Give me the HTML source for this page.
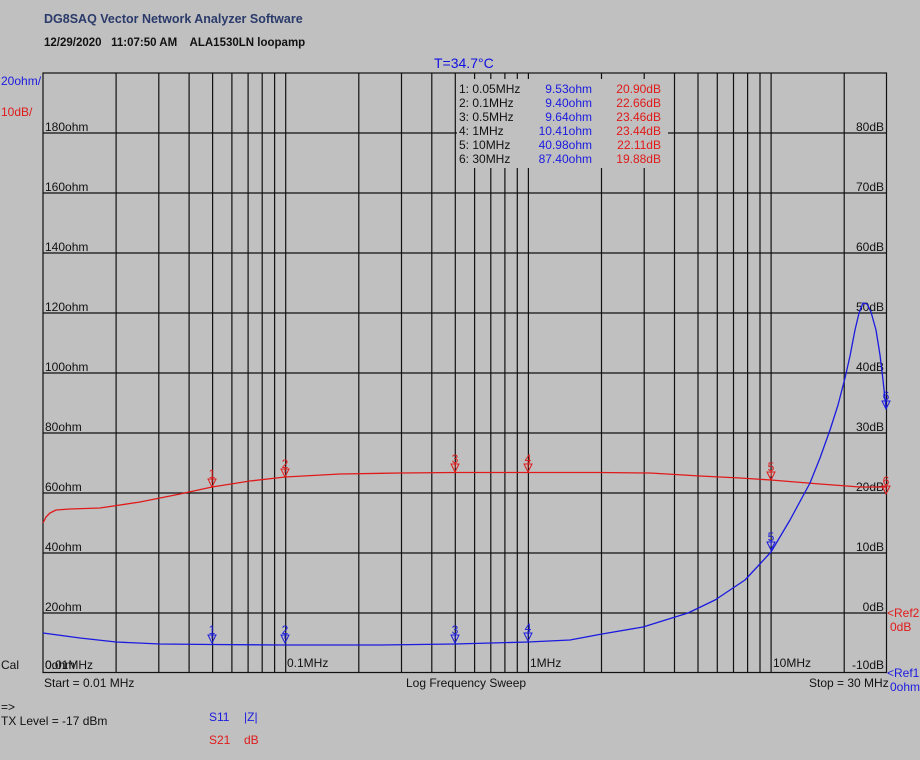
<!DOCTYPE html>
<html><head><meta charset="utf-8"><style>
html,body{margin:0;padding:0;background:#c0c0c0;}
svg{display:block;font-family:"Liberation Sans",Arial,sans-serif;font-size:12px;}
text{white-space:pre;}
</style></head><body>
<svg width="920" height="760" viewBox="0 0 920 760" xmlns="http://www.w3.org/2000/svg" xml:space="preserve">
<rect width="920" height="760" fill="#c0c0c0"/>
<text x="44" y="23" font-weight="bold" font-size="12.5" fill="#2a3a6a">DG8SAQ Vector Network Analyzer Software</text>
<text x="44" y="46" font-weight="bold" font-size="11.5" fill="#111">12/29/2020   11:07:50 AM    ALA1530LN loopamp</text>
<text x="434" y="68" font-size="14" fill="#1010e0">T=34.7°C</text>
<g stroke="#111" stroke-width="1.2" fill="none">
<rect x="43" y="73" width="843.5" height="599.5"/>
<path d="M43 133H886M43 193H886M43 253H886M43 313H886M43 373H886M43 433H886M43 493H886M43 553H886M43 613H886"/>
<path d="M116.1 73V673M158.8 73V673M189.1 73V673M212.6 73V673M231.9 73V673M248.1 73V673M262.2 73V673M274.6 73V673M285.7 73V673M358.8 73V673M401.5 73V673M431.8 73V673M455.3 73V673M474.6 73V673M490.8 73V673M504.9 73V673M517.3 73V673M528.4 73V673M601.5 73V673M644.2 73V673M674.5 73V673M698 73V673M717.3 73V673M733.5 73V673M747.6 73V673M760 73V673M771.1 73V673M844.2 73V673"/>
</g>
<rect x="457" y="79" width="211" height="89" fill="#c0c0c0"/>
<g font-size="12" fill="#111">
<text x="459" y="93">1: 0.05MHz</text><text x="459" y="107">2: 0.1MHz</text><text x="459" y="121">3: 0.5MHz</text><text x="459" y="135">4: 1MHz</text><text x="459" y="149">5: 10MHz</text><text x="459" y="163">6: 30MHz</text>
</g>
<g font-size="12" fill="#1a1ae0" text-anchor="end">
<text x="592" y="93">9.53ohm</text><text x="592" y="107">9.40ohm</text><text x="592" y="121">9.64ohm</text><text x="592" y="135">10.41ohm</text><text x="592" y="149">40.98ohm</text><text x="592" y="163">87.40ohm</text>
</g>
<g font-size="12" fill="#e01a1a" text-anchor="end">
<text x="661" y="93">20.90dB</text><text x="661" y="107">22.66dB</text><text x="661" y="121">23.46dB</text><text x="661" y="135">23.44dB</text><text x="661" y="149">22.11dB</text><text x="661" y="163">19.88dB</text>
</g>
<g font-size="12" fill="#111">
<text x="45" y="131">180ohm</text><text x="45" y="191">160ohm</text><text x="45" y="251">140ohm</text><text x="45" y="311">120ohm</text><text x="45" y="371">100ohm</text><text x="45" y="431">80ohm</text><text x="45" y="491">60ohm</text><text x="45" y="551">40ohm</text><text x="45" y="611">20ohm</text><text x="45" y="669">0ohm</text>
<text x="45" y="669">0.01MHz</text><text x="287" y="667">0.1MHz</text><text x="530" y="667">1MHz</text><text x="773" y="667">10MHz</text>
</g>
<g font-size="12" fill="#111" text-anchor="end">
<text x="884" y="131">80dB</text><text x="884" y="191">70dB</text><text x="884" y="251">60dB</text><text x="884" y="311">50dB</text><text x="884" y="371">40dB</text><text x="884" y="431">30dB</text><text x="884" y="491">20dB</text><text x="884" y="551">10dB</text><text x="884" y="611">0dB</text><text x="884" y="669">-10dB</text>
</g>
<text x="1" y="85" fill="#1a1ae0">20ohm/</text>
<text x="1" y="116" fill="#e01a1a">10dB/</text>
<text x="1" y="669" fill="#111">Cal</text>
<text x="44" y="687" fill="#111">Start = 0.01 MHz</text>
<text x="406" y="687" fill="#111">Log Frequency Sweep</text>
<text x="809" y="687" fill="#111">Stop = 30 MHz</text>
<text x="887" y="617" fill="#e01a1a">&lt;Ref2</text><text x="890" y="631" fill="#e01a1a">0dB</text>
<text x="887" y="677" fill="#1a1ae0">&lt;Ref1</text><text x="890" y="691" fill="#1a1ae0">0ohm</text>
<text x="1" y="711" fill="#111">=&gt;</text>
<text x="1" y="725" fill="#111">TX Level = -17 dBm</text>
<text x="209" y="721" fill="#1a1ae0">S11</text><text x="244" y="721" fill="#1a1ae0">|Z|</text>
<text x="209" y="744" fill="#e01a1a">S21</text><text x="244" y="744" fill="#e01a1a">dB</text>
<polyline fill="none" stroke="#e01a1a" stroke-width="1.3" stroke-linejoin="round" points="43,523 46,517 50,513 56,510 70,509 100,508 140,502 180,494 212,487 250,481 285,477 340,474 400,473 455,472.5 528,472.5 600,472.5 650,473 700,476 740,478 771,480 820,484 860,487 886,487"/>
<polyline fill="none" stroke="#1a1ae0" stroke-width="1.3" stroke-linejoin="round" points="43,633 80,638 116,642 160,644 212,644.5 285,645 380,645 455,644 528,642 570,640 602,634 643,627 688,613 715,600 745,580 771,552 790,520 810,483 820,458 830,430 838,405 845,378 850,356 855,330 859,313 863,303 867,304 871,312 876,330 880,355 883,380 886,408"/>
<g font-size="12" fill="#e01a1a" text-anchor="middle" stroke="#e01a1a" stroke-width="1">
<g transform="translate(212,487)"><text x="0" y="-9" stroke="none">1</text><path d="M-4,-8H4L0,0Z M0,-10V-4" fill="none"/></g>
<g transform="translate(285,477)"><text x="0" y="-9" stroke="none">2</text><path d="M-4,-8H4L0,0Z M0,-10V-4" fill="none"/></g>
<g transform="translate(455,472)"><text x="0" y="-9" stroke="none">3</text><path d="M-4,-8H4L0,0Z M0,-10V-4" fill="none"/></g>
<g transform="translate(528,472)"><text x="0" y="-9" stroke="none">4</text><path d="M-4,-8H4L0,0Z M0,-10V-4" fill="none"/></g>
<g transform="translate(771,480)"><text x="0" y="-9" stroke="none">5</text><path d="M-4,-8H4L0,0Z M0,-10V-4" fill="none"/></g>
<g transform="translate(886,494)"><text x="0" y="-9" stroke="none">6</text><path d="M-4,-8H4L0,0Z M0,-10V-4" fill="none"/></g>
</g>
<g font-size="12" fill="#1a1ae0" text-anchor="middle" stroke="#1a1ae0" stroke-width="1">
<g transform="translate(212,643)"><text x="0" y="-9" stroke="none">1</text><path d="M-4,-8H4L0,0Z M0,-10V-4" fill="none"/></g>
<g transform="translate(285,643)"><text x="0" y="-9" stroke="none">2</text><path d="M-4,-8H4L0,0Z M0,-10V-4" fill="none"/></g>
<g transform="translate(455,643)"><text x="0" y="-9" stroke="none">3</text><path d="M-4,-8H4L0,0Z M0,-10V-4" fill="none"/></g>
<g transform="translate(528,641)"><text x="0" y="-9" stroke="none">4</text><path d="M-4,-8H4L0,0Z M0,-10V-4" fill="none"/></g>
<g transform="translate(771,550)"><text x="0" y="-9" stroke="none">5</text><path d="M-4,-8H4L0,0Z M0,-10V-4" fill="none"/></g>
<g transform="translate(886,409)"><text x="0" y="-9" stroke="none">6</text><path d="M-4,-8H4L0,0Z M0,-10V-4" fill="none"/></g>
</g>
</svg>
</body></html>
